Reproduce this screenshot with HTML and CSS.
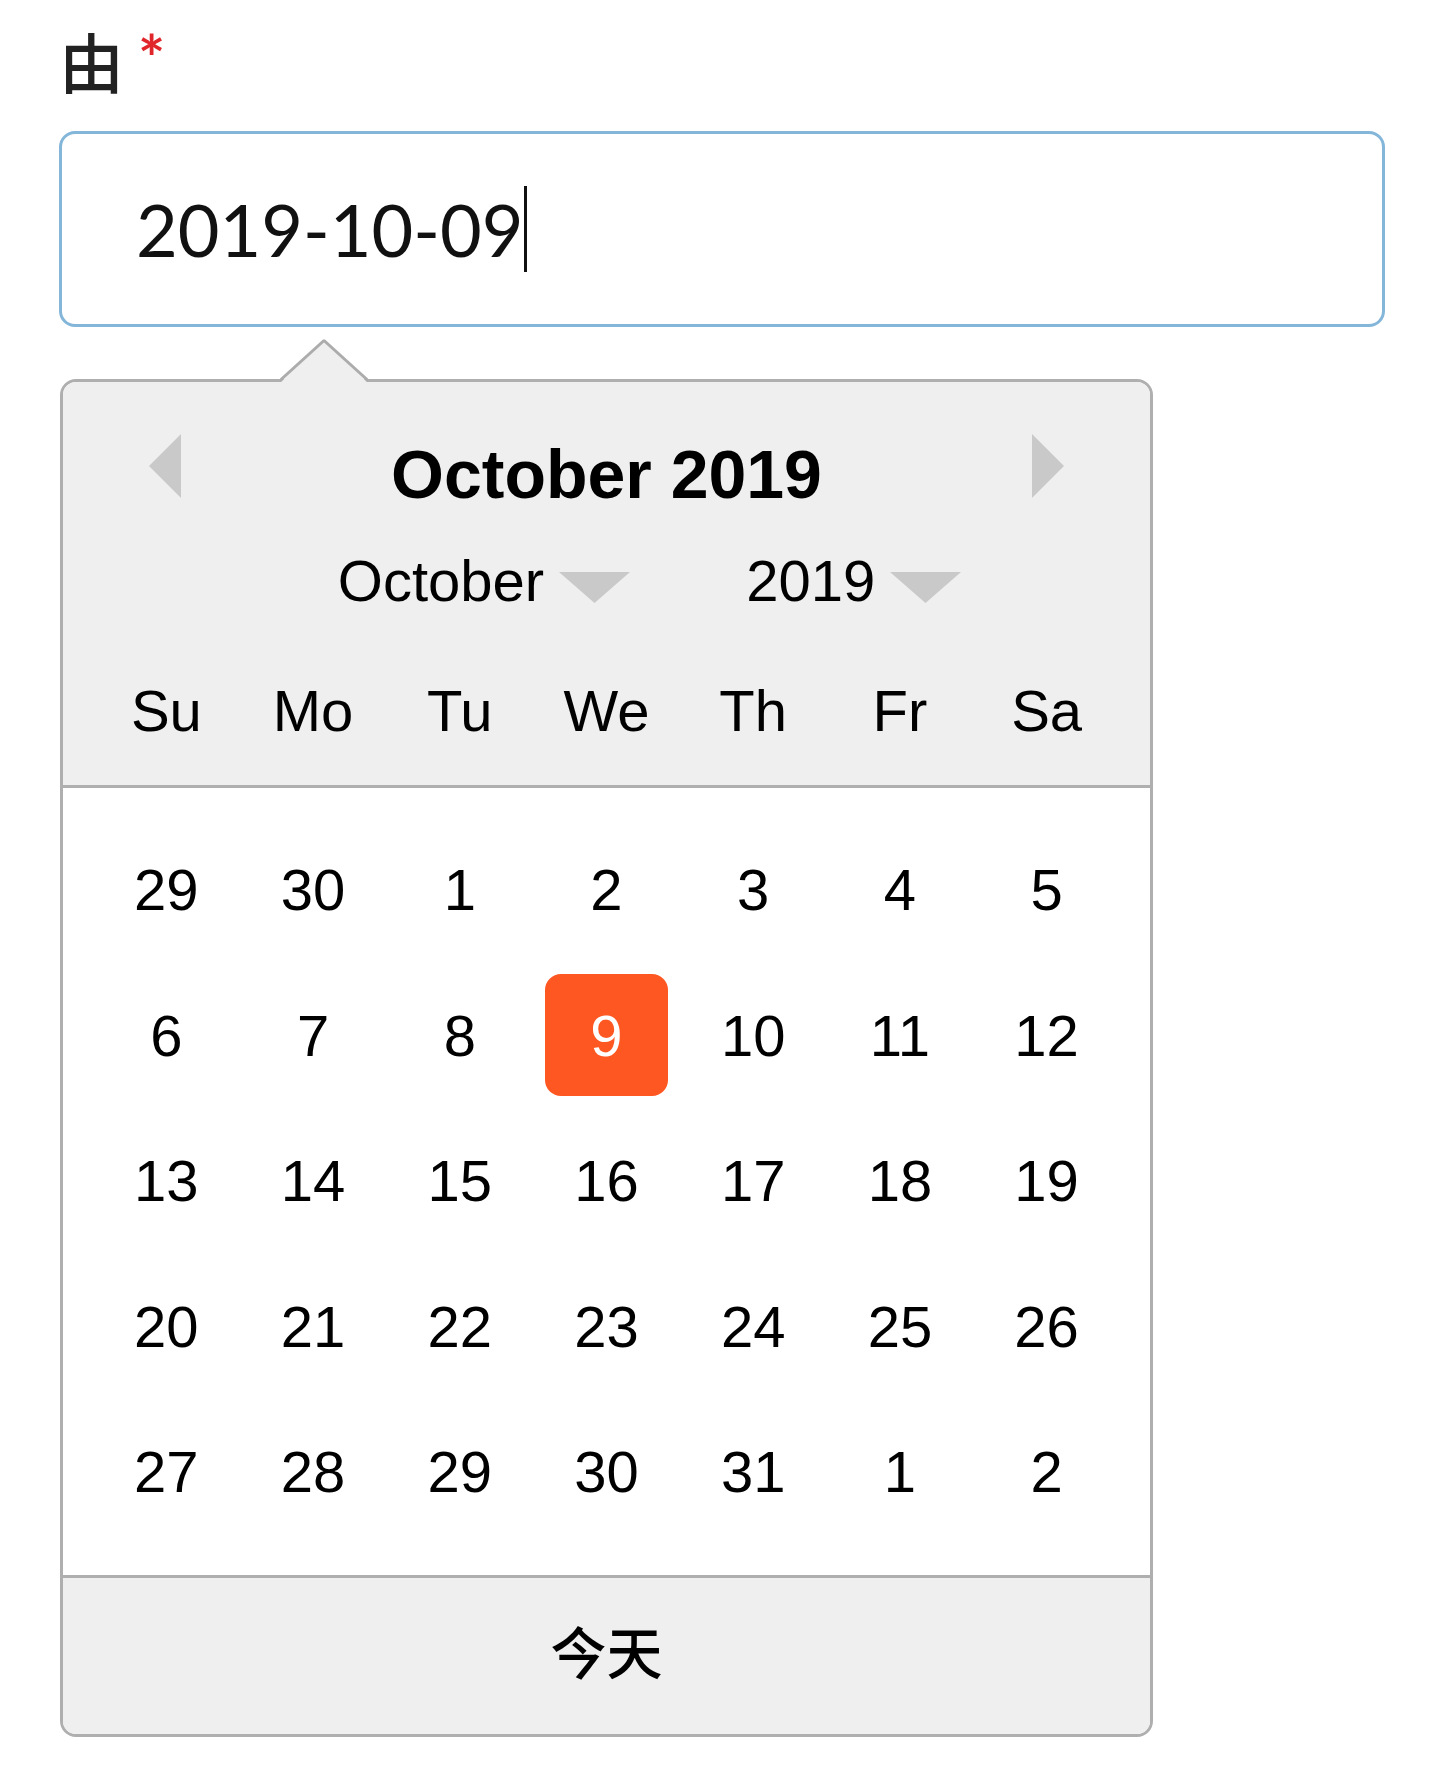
FILE: index.html
```html
<!DOCTYPE html>
<html lang="zh-CN">
<head>
  <meta charset="UTF-8" />
  <meta name="viewport" content="width=device-width, initial-scale=1.0">
  <title>日期选择</title>
  <link rel="stylesheet" href="styles.css">
</head>
<body>

  <div class="field">
    <div class="field-label">由<span class="req">*</span></div>

    <!-- campo de data com cursor -->
    <div class="date-input"><span class="date-value">2019-10-09</span></div>

    <div class="picker">
      <svg class="picker-tip" width="88" height="44" viewBox="0 0 88 44">
        <path d="M0 44 L44 2 L88 44 Z" fill="#efefef"/>
        <path d="M0 41.5 L44 1.5 L88 41.5" fill="none" stroke="#acacac" stroke-width="3" stroke-linejoin="bevel"/>
      </svg>

      <div class="calendar">
        <div class="cal-head">
          <div class="cal-nav">
            <svg class="cal-arrow" width="32" height="64" viewBox="0 0 32 64"><path d="M32 0 L0 32 L32 64 Z" fill="#c9c9c9"/></svg>
            <div class="cal-title">October 2019</div>
            <svg class="cal-arrow" width="32" height="64" viewBox="0 0 32 64"><path d="M0 0 L32 32 L0 64 Z" fill="#c9c9c9"/></svg>
          </div>

          <div class="cal-selects">
            <div class="cal-select">
              <span>October</span>
              <svg class="caret" width="71" height="31" viewBox="0 0 71 31"><path d="M0 0 H71 L35.5 31 Z" fill="#c9c9c9"/></svg>
            </div>
            <div class="cal-select">
              <span>2019</span>
              <svg class="caret" width="71" height="31" viewBox="0 0 71 31"><path d="M0 0 H71 L35.5 31 Z" fill="#c9c9c9"/></svg>
            </div>
          </div>

          <div class="cal-weekdays">
            <span>Su</span><span>Mo</span><span>Tu</span><span>We</span><span>Th</span><span>Fr</span><span>Sa</span>
          </div>
        </div>

        <div class="cal-days">
          <div class="cal-day">29</div><div class="cal-day">30</div><div class="cal-day">1</div><div class="cal-day">2</div><div class="cal-day">3</div><div class="cal-day">4</div><div class="cal-day">5</div>
          <div class="cal-day">6</div><div class="cal-day">7</div><div class="cal-day">8</div><div class="cal-day is-selected">9</div><div class="cal-day">10</div><div class="cal-day">11</div><div class="cal-day">12</div>
          <div class="cal-day">13</div><div class="cal-day">14</div><div class="cal-day">15</div><div class="cal-day">16</div><div class="cal-day">17</div><div class="cal-day">18</div><div class="cal-day">19</div>
          <div class="cal-day">20</div><div class="cal-day">21</div><div class="cal-day">22</div><div class="cal-day">23</div><div class="cal-day">24</div><div class="cal-day">25</div><div class="cal-day">26</div>
          <div class="cal-day">27</div><div class="cal-day">28</div><div class="cal-day">29</div><div class="cal-day">30</div><div class="cal-day">31</div><div class="cal-day">1</div><div class="cal-day">2</div>
        </div>

        <div class="cal-foot">今天</div>
      </div>
    </div>
  </div>

</body>
</html>
```

FILE: styles.css
```css
body {
  margin: 0;
  background: #fff;
  font-family: Lato, "Noto Sans CJK SC", sans-serif;
  color: #111;
}

.field {
  padding: 26px 53px 0 59px;
}

.field-label {
  font-family: "Noto Sans CJK SC", sans-serif;
  font-size: 65px;
  font-weight: 500;
  line-height: 64px;
  color: #222;
}

.req {
  font-family: Lato, sans-serif;
  font-size: 64px;
  font-weight: bold;
  color: #e0262b;
  margin-left: 14px;
  vertical-align: 6px;
}

/* campo de data */
.date-input {
  margin-top: 39px;
  height: 196px;
  box-sizing: border-box;
  border: 3px solid #84b6da;
  border-radius: 16px;
  display: flex;
  align-items: center;
  padding-left: 74px;
}

.date-value {
  font-size: 72px;
  line-height: normal;
  border-right: 3px solid #111;
}

/* calendario */
.picker {
  position: relative;
  width: 1093px;
  margin: 52px 0 0 1px;
}

.picker-tip {
  position: absolute;
  left: 220px;
  top: -40px;
  display: block;
}

.calendar {
  border: 3px solid #afafaf;
  border-radius: 16px;
  overflow: hidden;
  background: #fff;
  font-family: "Liberation Sans", Arial, sans-serif;
  color: #000;
}

.cal-head {
  background: #efefef;
  border-bottom: 3px solid #afafaf;
  padding: 53px 0 40px;
}

.cal-nav {
  display: flex;
  align-items: center;
  height: 78px;
  padding: 0 86px;
}

.cal-arrow {
  display: block;
  margin-top: 5px;
  margin-bottom: 21px;
}

.cal-title {
  flex: 1;
  text-align: center;
  font-size: 68px;
  font-weight: bold;
}

.cal-selects {
  display: flex;
  justify-content: center;
  gap: 116px;
  margin-top: 34px;
  padding-left: 86px;
  font-size: 58px;
}

.cal-select {
  display: flex;
  align-items: center;
  gap: 15px;
}

.caret {
  display: block;
  margin-top: 14px;
}

.cal-weekdays {
  display: grid;
  grid-template-columns: repeat(7, 1fr);
  padding: 0 30px;
  margin-top: 62px;
  font-size: 58px;
  line-height: 69px;
  text-align: center;
}

.cal-days {
  display: grid;
  grid-template-columns: repeat(7, 1fr);
  grid-auto-rows: 145.5px;
  padding: 29px 30px 30px;
  font-size: 58px;
}

.cal-day {
  width: 123px;
  height: 122px;
  margin: auto;
  border-radius: 16px;
  display: flex;
  align-items: center;
  justify-content: center;
}

.cal-day.is-selected {
  background: #ff5722;
  color: #fff;
}

.cal-foot {
  background: #efefef;
  border-top: 3px solid #afafaf;
  height: 159px;
  box-sizing: border-box;
  padding-bottom: 12px;
  display: flex;
  align-items: center;
  justify-content: center;
  font-family: "Noto Sans CJK SC", sans-serif;
  font-size: 56px;
  font-weight: 500;
}
```
